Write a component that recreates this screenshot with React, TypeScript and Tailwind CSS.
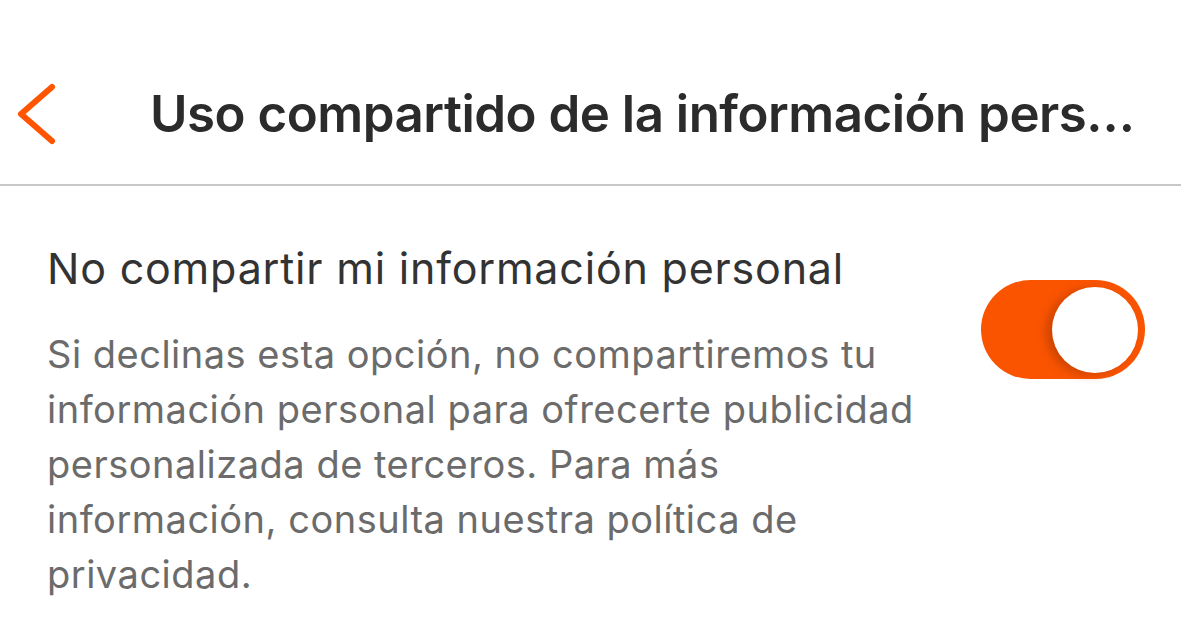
export default function App() {
  return (
    <div className="min-h-screen w-full bg-white" style={{ fontFamily: "Inter, 'Liberation Sans', sans-serif" }}>
      {/* header */}
      <div className="flex h-[186px] items-center border-b-2 border-[#c8c8c8] pt-[44px]">
        <button className="flex w-[150px] shrink-0 items-center pl-[16px]">
          <svg width="40" height="62" viewBox="0 0 40 62" fill="none">
            <path d="M36 4 L5 31 L36 58" stroke="#ff5500" strokeWidth="6" strokeLinecap="round" strokeLinejoin="round" />
          </svg>
        </button>
        <h1 className="min-w-0 flex-1 truncate pr-[34px] text-[51px] font-semibold tracking-[-0.5px] text-[#2b2b2b]">
          Uso compartido de la información personal
        </h1>
      </div>

      {/* setting row */}
      <div className="flex items-start pl-[47px] pr-[36px] pt-[56px]">
        <div className="w-[880px] shrink-0">
          <div className="text-[43px] leading-[52px] tracking-[0.8px] text-[#333333]">No compartir mi información personal</div>
          <p className="mt-[33px] text-[38px] leading-[55px] tracking-[0.5px] text-[#6b6b6b]">
            Si declinas esta opción, no compartiremos tu información personal para ofrecerte publicidad personalizada de
            terceros. Para más información, consulta nuestra política de privacidad.
          </p>
        </div>
        <div className="ml-auto mt-[38px] flex h-[99px] w-[164px] shrink-0 items-center justify-end rounded-full bg-[#fa5400] pr-[7px]">
          <div className="h-[86px] w-[86px] rounded-full bg-white shadow-[-6px_2px_10px_rgba(120,40,0,0.35)]" />
        </div>
      </div>
    </div>
  );
}
